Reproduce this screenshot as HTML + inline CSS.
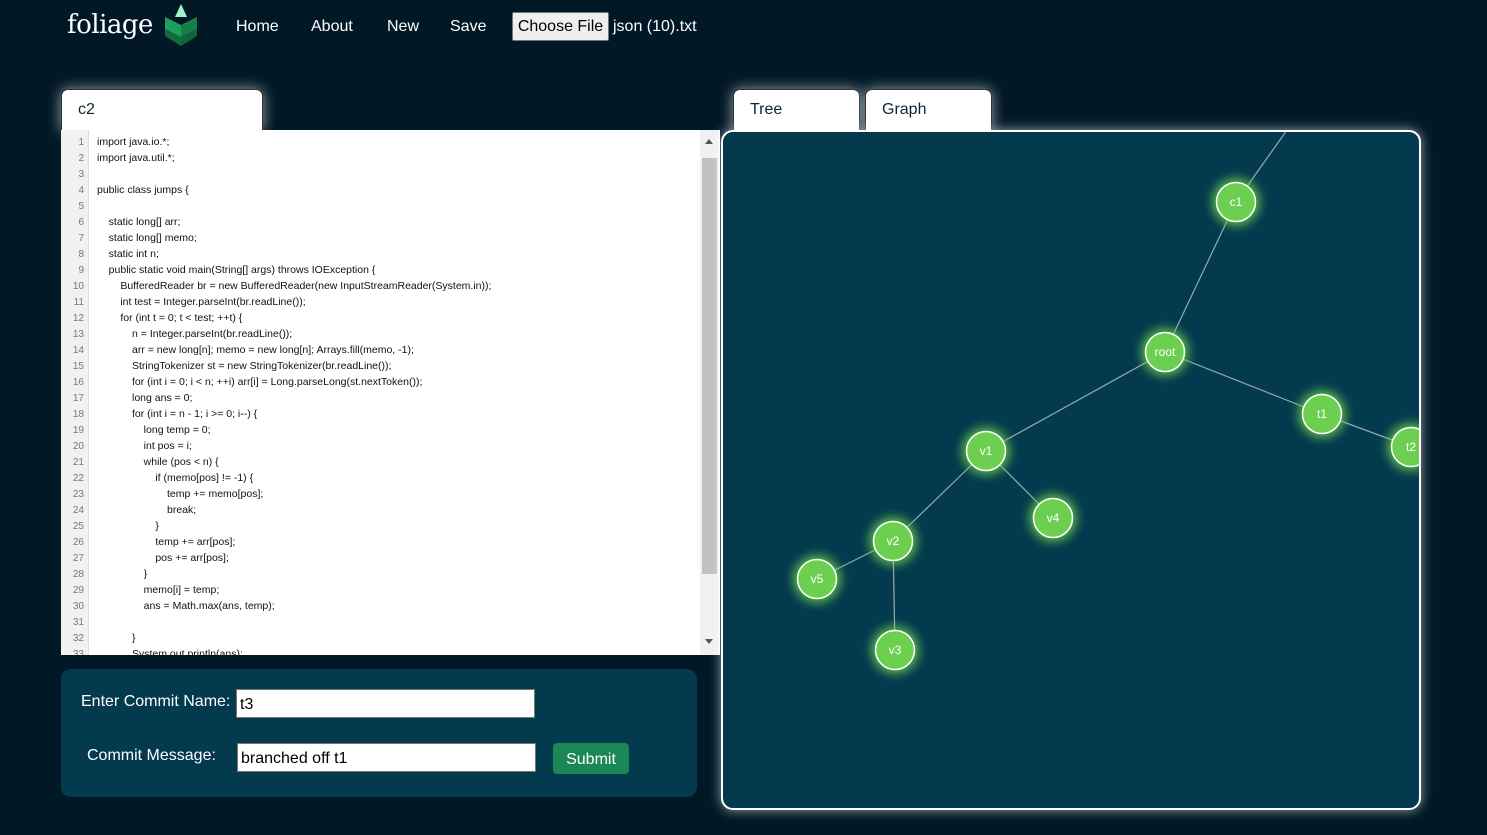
<!DOCTYPE html>
<html><head><style>
body{margin:0;width:1487px;height:835px;background:#011826;font-family:"Liberation Sans",sans-serif;overflow:hidden;position:relative}
.logo{position:absolute;left:67px;top:10px;font-family:"DejaVu Serif","Liberation Serif",serif;font-size:26px;color:#fff;letter-spacing:-0.5px}
.nl{position:absolute;top:18px;color:#fff;font-size:16px}
.cf{position:absolute;left:512px;top:12px;width:97px;height:29px;background:#efefef;border:1px solid #767676;border-radius:2px;box-sizing:border-box;font-size:16px;text-align:center;line-height:27px;color:#000}
.tab{position:absolute;background:#fff;border:1px solid #333;border-bottom:none;border-radius:7px 7px 0 0;box-shadow:0 0 14px rgba(255,255,255,.6);font-size:16px;color:#0e2433;box-sizing:border-box;padding:11px 0 0 16px}
.ed{position:absolute;left:61px;top:130px;width:659px;height:525px;background:#fff;overflow:hidden}
.gut{position:absolute;left:0;top:0;width:27px;height:100%;background:#f1f1f1;border-right:1px solid #ddd}
.ln{position:absolute;left:0;width:23px;text-align:right;font-size:10px;color:#777}
.cl{position:absolute;left:36px;font-size:10.5px;color:#111;white-space:pre}
.sb{position:absolute;left:639px;top:0;width:19px;height:525px;background:#f1f1f1}
.th{position:absolute;left:641px;top:28px;width:15px;height:416px;background:#c1c1c1}
.form{position:absolute;left:61px;top:669px;width:636px;height:128px;background:#033a4e;border-radius:10px}
.lab{position:absolute;color:#fff;font-size:16px}
.inp{position:absolute;background:#fff;border:1px solid #767676;height:29px;width:299px;box-sizing:border-box;font-size:16px;padding:6px 3px 0;color:#000}
.btn{position:absolute;left:553px;top:743px;width:76px;height:31px;background:#1b8754;border-radius:4px;color:#fff;font-size:16px;text-align:center;line-height:33px}
.gp{position:absolute;left:721px;top:130px;width:700px;height:680px;background:#033a4e;border:2px solid #fff;border-radius:12px;box-sizing:border-box;box-shadow:0 0 12px rgba(255,255,255,.6);overflow:hidden}
</style></head><body>
<div class="logo">foliage</div>
<svg style="position:absolute;left:162px;top:3px" width="38" height="44" viewBox="0 0 38 44">
<polygon points="19,1 25,14 13,14" fill="#9ff2c8"/>
<polygon points="3,14 19,22 35,14 35,26 19,34 3,26" fill="#1f9e5e"/>
<polygon points="3,26 19,34 35,26 35,33 19,43 3,33" fill="#136b3d"/>
<polygon points="19,22 35,14 35,33 19,43" fill="#0f5c33" opacity=".5"/>
</svg>
<div class="nl" style="left:236px">Home</div>
<div class="nl" style="left:311px">About</div>
<div class="nl" style="left:387px">New</div>
<div class="nl" style="left:450px">Save</div>
<div class="cf">Choose File</div>
<div class="nl" style="left:613px">json (10).txt</div>

<div class="tab" style="left:61px;top:89px;width:202px;height:42px">c2</div>
<div class="tab" style="left:733px;top:89px;width:127px;height:42px">Tree</div>
<div class="tab" style="left:865px;top:89px;width:127px;height:42px">Graph</div>

<div class="ed">
<div class="gut"></div>
<div id="code"></div>
<div class="sb"></div><div class="th"></div>
<div style="position:absolute;left:644px;top:9px;border:4.5px solid transparent;border-bottom:5px solid #555;border-top:none"></div>
<div style="position:absolute;left:644px;top:509px;border:4.5px solid transparent;border-top:5px solid #555;border-bottom:none"></div>
</div>
<script>
var L=["import java.io.*;","import java.util.*;","","public class jumps {","","    static long[] arr;","    static long[] memo;","    static int n;","    public static void main(String[] args) throws IOException {","        BufferedReader br = new BufferedReader(new InputStreamReader(System.in));","        int test = Integer.parseInt(br.readLine());","        for (int t = 0; t < test; ++t) {","            n = Integer.parseInt(br.readLine());","            arr = new long[n]; memo = new long[n]; Arrays.fill(memo, -1);","            StringTokenizer st = new StringTokenizer(br.readLine());","            for (int i = 0; i < n; ++i) arr[i] = Long.parseLong(st.nextToken());","            long ans = 0;","            for (int i = n - 1; i >= 0; i--) {","                long temp = 0;","                int pos = i;","                while (pos < n) {","                    if (memo[pos] != -1) {","                        temp += memo[pos];","                        break;","                    }","                    temp += arr[pos];","                    pos += arr[pos];","                }","                memo[i] = temp;","                ans = Math.max(ans, temp);","","            }","            System.out.println(ans);"];
var h="";for(var i=0;i<L.length;i++){var y=6+i*16;h+='<div class="ln" style="top:'+(y+1)+'px">'+(i+1)+'</div><div class="cl" style="top:'+y+'px">'+L[i].replace(/</g,"&lt;")+'</div>';}
document.getElementById("code").innerHTML=h;
</script>

<div class="form"></div>
<div class="lab" style="left:81px;top:693px">Enter Commit Name:</div>
<div class="inp" style="left:236px;top:689px">t3</div>
<div class="lab" style="left:87px;top:747px">Commit Message:</div>
<div class="inp" style="left:237px;top:743px">branched off t1</div>
<div class="btn">Submit</div>

<div class="gp">
<svg width="700" height="680" style="position:absolute;left:-1px;top:-2px">
<defs><filter id="g" x="-1" y="-1" width="3" height="3"><feGaussianBlur stdDeviation="5"/></filter></defs>
<g transform="translate(-722,-130)" stroke="#9aa" stroke-width="1.2">
<line x1="1287" y1="130" x2="1236" y2="202"/><line x1="1236" y1="202" x2="1165" y2="352"/>
<line x1="1165" y1="352" x2="1322" y2="414"/><line x1="1322" y1="414" x2="1411" y2="447"/>
<line x1="1165" y1="352" x2="986" y2="451"/><line x1="986" y1="451" x2="1053" y2="518"/>
<line x1="986" y1="451" x2="893" y2="541"/><line x1="893" y1="541" x2="817" y2="579"/>
<line x1="893" y1="541" x2="895" y2="650"/>
</g>
<g transform="translate(-722,-130)" font-family="Liberation Sans,sans-serif" font-size="12" fill="#fff" text-anchor="middle">
<g id="n"></g>
</g>
</svg>
</div>
<script>
var N=[["c1",1236,202],["root",1165,352],["t1",1322,414],["t2",1411,447],["v1",986,451],["v4",1053,518],["v2",893,541],["v5",817,579],["v3",895,650]];
var s="";N.forEach(function(n){s+='<circle cx="'+n[1]+'" cy="'+n[2]+'" r="24" fill="#6fd34f" filter="url(#g)" opacity=".8"/><circle cx="'+n[1]+'" cy="'+n[2]+'" r="19.5" fill="#6dcf4f" stroke="#fff" stroke-width="1.5"/><text x="'+n[1]+'" y="'+(n[2]+4)+'">'+n[0]+'</text>';});
document.getElementById("n").innerHTML=s;
</script>
</body></html>
